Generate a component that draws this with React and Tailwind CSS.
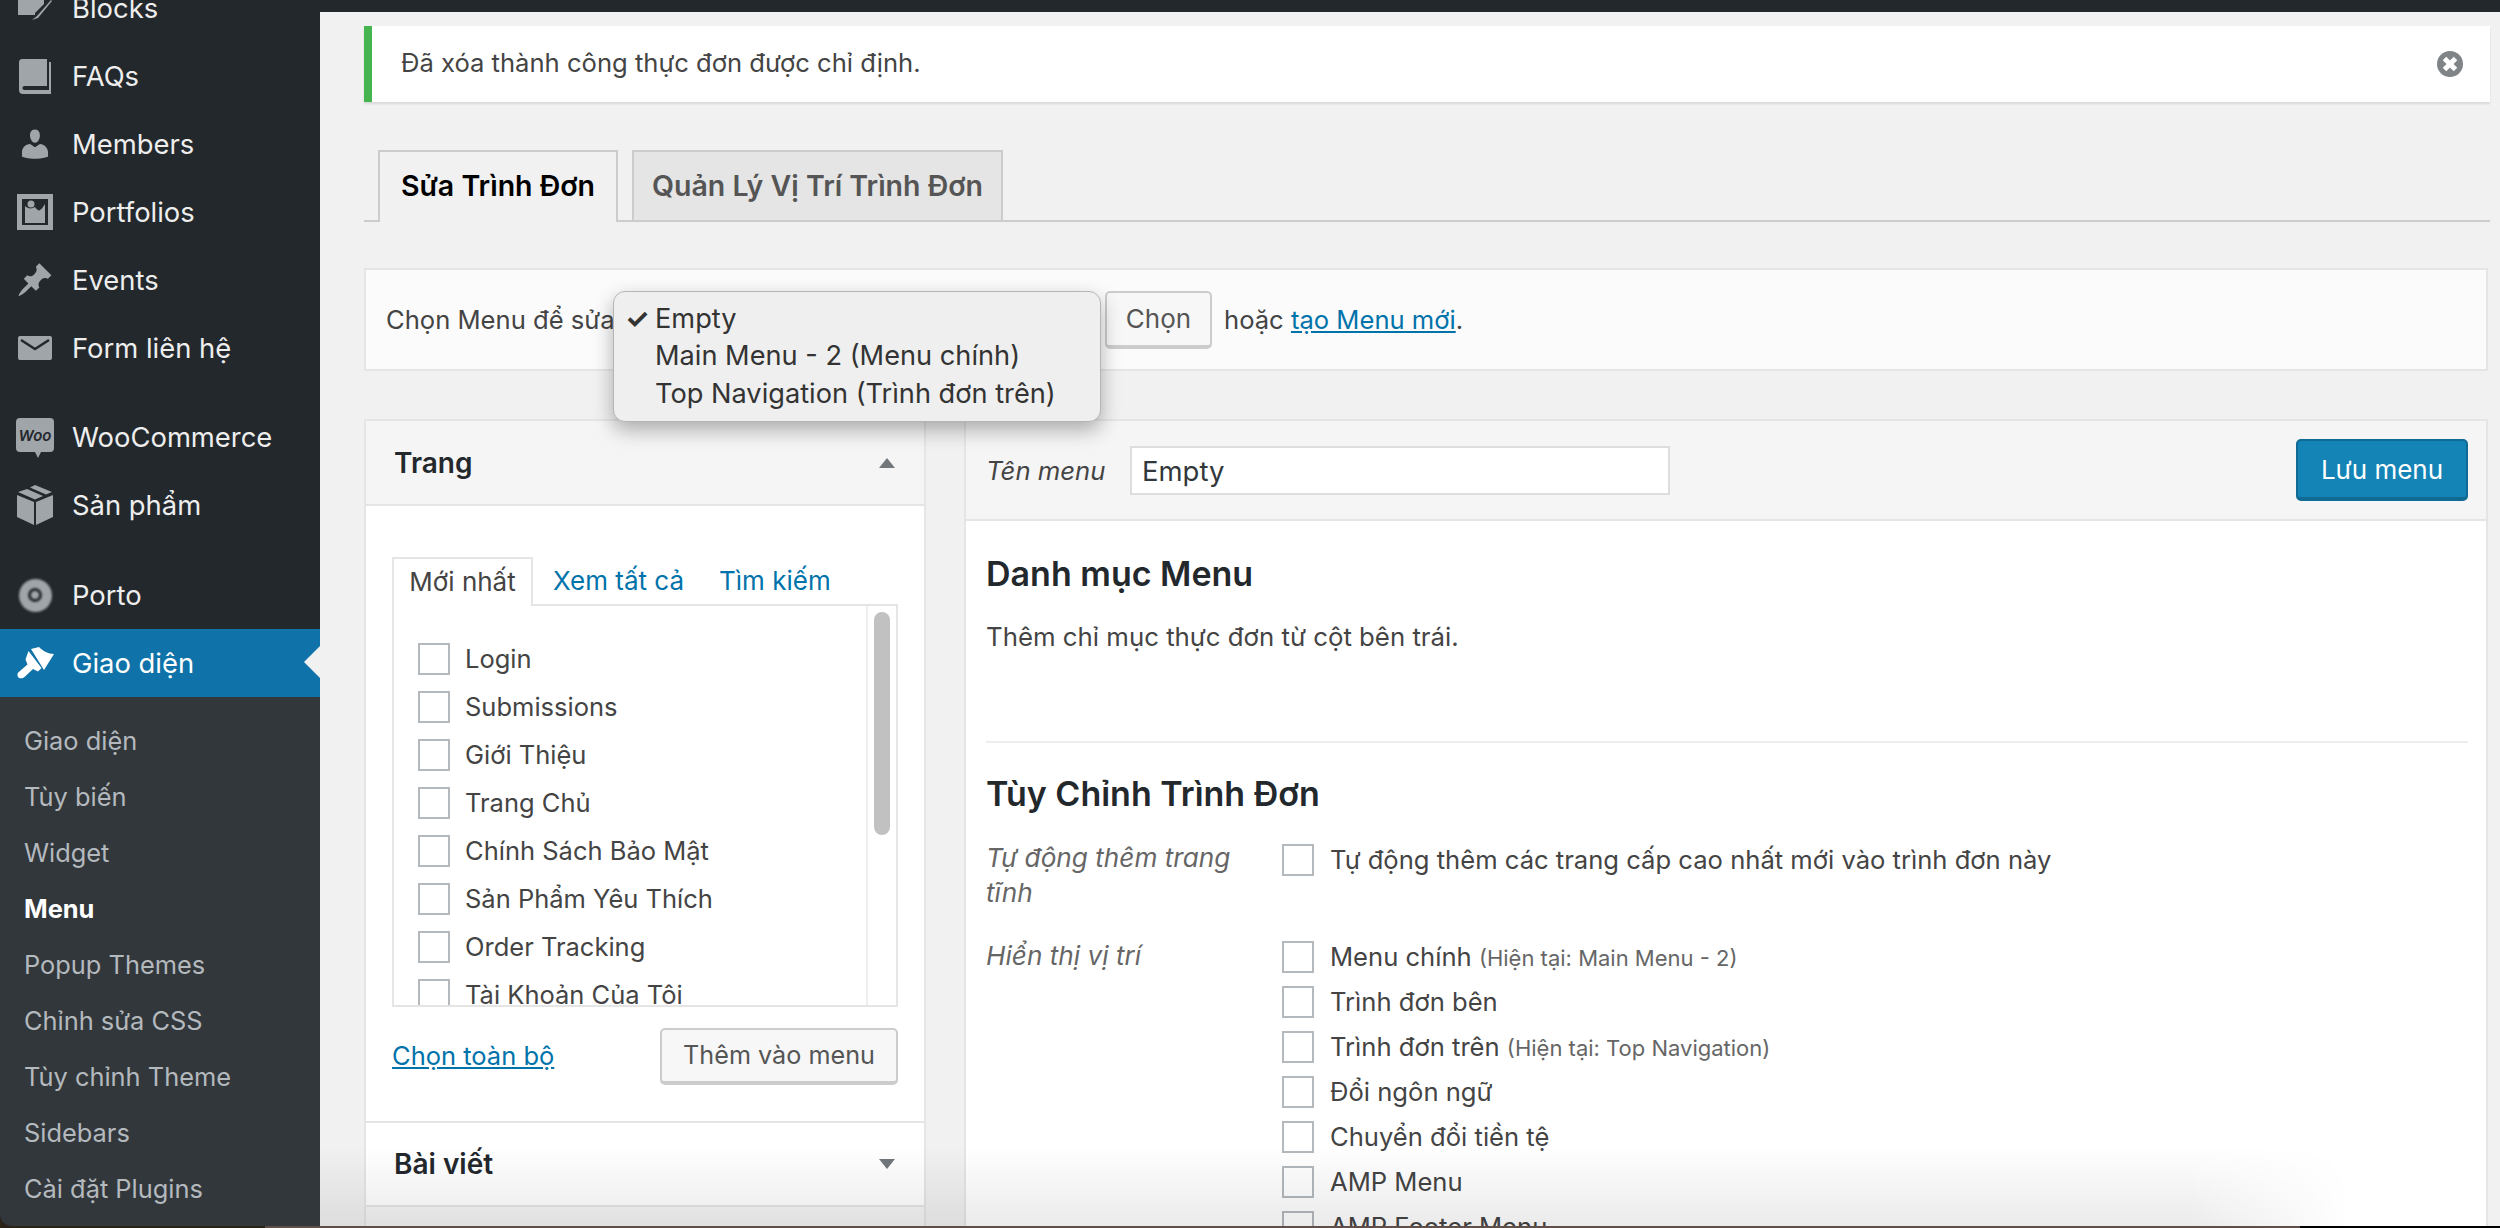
const ICON = "#a0a5aa";

const BlockIcon = () => (
  <svg width="36" height="36" viewBox="0 0 36 36" fill={ICON}>
    <path d="M1 2h26v12l-9 9 0 2H1z" />
    <path d="M20 26l14-16 1 1-14 17-6 2z" />
  </svg>
);
const BookIcon = () => (
  <svg width="34" height="36" viewBox="0 0 34 36" fill={ICON}>
    <path d="M1 5c0-3 1-4 4-4h24v27H7c-1.500 0-2.500.500-2.500 2s1 2 2.500 2h24V4h2v32H5c-3 0-4-2-4-4z" />
  </svg>
);
const UserIcon = () => (
  <svg width="36" height="36" viewBox="0 0 20 20" fill={ICON}>
    <path d="M10 9.250c-2.270 0-2.730-3.440-2.730-3.440C7 4.020 7.820 2 9.970 2c2.160 0 2.980 2.020 2.710 3.810 0 0-.410 3.440-2.680 3.440zm0 2.570L12.720 10c2.390 0 4.520 2.330 4.520 4.530v2.490s-3.650 1.130-7.240 1.130c-3.650 0-7.240-1.130-7.240-1.130v-2.490c0-2.250 1.940-4.480 4.470-4.480z" />
  </svg>
);
const PortfolioIcon = () => (
  <svg width="36" height="36" viewBox="0 0 36 36" fill={ICON}>
    <path fillRule="evenodd" d="M0 0h36v36H0zM5 5v26h26V5z" />
    <circle cx="14" cy="10" r="3.500" />
    <path d="M8 12c3 3 7 3 10 1 2 3 4 4 5 3 2-1 3-3 5-6v19H8z" />
  </svg>
);
const PinIcon = () => (
  <svg width="38" height="38" viewBox="0 0 20 20" fill={ICON}>
    <path d="M10.440 3.020l1.820-1.820 6.360 6.350-1.830 1.820c-1.050-.680-2.480-.570-3.410.360l-.750.750c-.920.930-1.040 2.350-.350 3.410l-1.830 1.820-2.410-2.410-2.800 2.790c-.420.420-3.380 2.710-3.800 2.290s1.860-3.390 2.280-3.810l2.790-2.790L4.100 9.360l1.830-1.820c1.050.690 2.480.570 3.400-.360l.750-.750c.930-.920 1.050-2.350.360-3.410z" />
  </svg>
);
const MailIcon = () => (
  <svg width="34" height="24" viewBox="0 0 34 24">
    <rect width="34" height="24" rx="2" fill={ICON} />
    <path d="M3 4l14 9 14-9" fill="none" stroke="#23282d" strokeWidth="2.500" />
  </svg>
);
const BoxIcon = () => (
  <svg width="36" height="40" viewBox="0 0 36 40" fill={ICON}>
    <path d="M18 0l17 7-6 2.500L13 2.500zM10 4l16 7-8 3.500L1 7z" />
    <path d="M0 10l17 7v23L0 32z" />
    <path d="M36 10l-17 7v23l17-8z" />
  </svg>
);
const BrushIcon = () => (
  <svg width="38" height="32" viewBox="17 648 38 32" fill="#fff">
    <path d="M32 650l8-2c4 4 9 7 15 7l-10 16z" />
    <path d="M29.500 652l13 17-3.500 3.500-5-2.500-8.500 8c-2 2-6.500 2-7-1.500-.500-2 1-3.500 3-5l7-6-2-5z" />
  </svg>
);
const WooIcon = () => (
  <div className="relative -mt-[4px] flex h-[34px] w-[38px] items-center justify-center rounded-[4px] bg-[#a0a5aa]">
    <span className="text-[15px] font-semibold italic leading-none text-[#23282d]">Woo</span>
    <div className="absolute -bottom-[6px] left-[19px] h-0 w-0 border-x-[3px] border-t-[6px] border-x-transparent border-t-[#a0a5aa]" />
  </div>
);
const PortoIcon = () => (
  <div className="flex h-[33px] w-[33px] items-center justify-center rounded-full bg-[#a0a5aa] blur-[1px]">
    <div className="h-[14px] w-[14px] rounded-full border-[3px] border-[#23282d]" />
  </div>
);

const menuItems = [
  { label: "Blocks", icon: <BlockIcon /> },
  { label: "FAQs", icon: <BookIcon /> },
  { label: "Members", icon: <UserIcon /> },
  { label: "Portfolios", icon: <PortfolioIcon /> },
  { label: "Events", icon: <PinIcon /> },
  { label: "Form liên hệ", icon: <MailIcon /> },
  { gap: 21 },
  { label: "WooCommerce", icon: <WooIcon /> },
  { label: "Sản phẩm", icon: <BoxIcon /> },
  { gap: 22 },
  { label: "Porto", icon: <PortoIcon /> },
];

const subItems = ["Giao diện", "Tùy biến", "Widget", "Menu", "Popup Themes", "Chỉnh sửa CSS", "Tùy chỉnh Theme", "Sidebars", "Cài đặt Plugins"];
const pages = ["Login", "Submissions", "Giới Thiệu", "Trang Chủ", "Chính Sách Bảo Mật", "Sản Phẩm Yêu Thích", "Order Tracking", "Tài Khoản Của Tôi"];
const locations = [
  { label: "Menu chính", note: "(Hiện tại: Main Menu - 2)" },
  { label: "Trình đơn bên" },
  { label: "Trình đơn trên", note: "(Hiện tại: Top Navigation)" },
  { label: "Đổi ngôn ngữ" },
  { label: "Chuyển đổi tiền tệ" },
  { label: "AMP Menu" },
  { label: "AMP Footer Menu" },
];

const Checkbox = () => <div className="h-[32px] w-[32px] shrink-0 border-2 border-[#b4b9be] bg-white" />;

const Sidebar = () => (
  <aside className="flex w-[320px] shrink-0 flex-col overflow-hidden rounded-bl-[12px] bg-[#23282d] text-[27.4px] text-[#eeeeee]">
    <div className="-mt-[26px]">
      {menuItems.map((item, i) =>
        item.gap ? (
          <div key={i} style={{ height: item.gap }} />
        ) : (
          <div key={i} className="flex h-[68px] items-center">
            <div className="flex w-[72px] justify-center pr-[2px]">{item.icon}</div>
            <span className="pt-[2px]">{item.label}</span>
          </div>
        )
      )}
    </div>
    <div className="relative flex h-[68px] shrink-0 items-center bg-[#0f73a9] text-white">
      <div className="flex w-[72px] justify-center pr-[2px]"><BrushIcon /></div>
      <span className="pt-[2px]">Giao diện</span>
      <div className="absolute right-0 top-[17px] h-0 w-0 border-y-[16px] border-r-[16px] border-y-transparent border-r-[#f1f1f1]" />
    </div>
    <div className="flex-1 bg-[#32373c] pt-[16px] text-[25.4px] text-[#b4b9be]">
      {subItems.map((s) => (
        <div key={s} className={`flex h-[56px] items-center pl-[24px] ${s === "Menu" ? "font-bold text-white" : ""}`}>{s}</div>
      ))}
    </div>
  </aside>
);

const PagesPanel = () => (
  <div className="w-[562px] shrink-0 border-2 border-[#e5e5e5] bg-white">
    <div className="flex h-[85px] items-center justify-between border-b-2 border-[#e5e5e5] bg-[#f5f5f5] pl-[28px] pr-[29px]">
      <span className="text-[28px] font-semibold text-[#23282d]">Trang</span>
      <div className="h-0 w-0 border-x-[8px] border-b-[10px] border-x-transparent border-b-[#72777c]" />
    </div>
    <div className="border-b-2 border-[#e5e5e5] px-[26px] pb-[36px] pt-[51px]">
      <div className="flex h-[47px] items-end text-[26px]">
        <div className="-mb-[2px] flex h-[49px] w-[141px] items-center justify-center border-x-2 border-t-2 border-[#e5e5e5] bg-white pb-[2px] text-[#444444]">Mới nhất</div>
        <span className="ml-[20px] pb-[4px] text-[#0073aa]">Xem tất cả</span>
        <span className="ml-[35px] pb-[4px] text-[#0073aa]">Tìm kiếm</span>
      </div>
      <div className="flex h-[403px] overflow-hidden border-2 border-[#e5e5e5]">
        <div className="flex-1 pl-[24px] pt-[29px] text-[25.5px] text-[#444444]">
          {pages.map((p) => (
            <div key={p} className="flex h-[48px] items-center gap-[15px]"><Checkbox />{p}</div>
          ))}
        </div>
        <div className="w-[30px] border-l-2 border-[#eeeeee] px-[6px] pt-[6px]">
          <div className="h-[223px] rounded-full bg-[#c1c1c1]" />
        </div>
      </div>
      <div className="mt-[21px] flex items-center justify-between text-[25.5px]">
        <span className="text-[#0073aa] underline">Chọn toàn bộ</span>
        <button className="h-[57px] w-[238px] rounded-[5px] border-2 border-b-[4px] border-[#cccccc] bg-[#f7f7f7] text-[25.2px] text-[#555555]">Thêm vào menu</button>
      </div>
    </div>
    <div className="flex h-[84px] items-center justify-between border-b-2 border-[#e5e5e5] pl-[28px] pr-[29px]">
      <span className="text-[28px] font-semibold text-[#23282d]">Bài viết</span>
      <div className="h-0 w-0 border-x-[8px] border-t-[10px] border-x-transparent border-t-[#72777c]" />
    </div>
    <div className="h-[40px] bg-[#f5f5f5]" />
  </div>
);

const EditorPanel = () => (
  <div className="flex-1 border-2 border-[#e5e5e5] bg-white text-[#444444]">
    <div className="flex h-[100px] items-center border-b-2 border-[#e5e5e5] bg-[#f5f5f5] pl-[20px] pr-[18px]">
      <span className="w-[144px] pt-[3px] text-[25.7px] italic">Tên menu</span>
      <div className="flex h-[49px] w-[540px] items-center border-2 border-[#dddddd] bg-white pl-[10px] pt-[3px] text-[27.5px] text-[#32373c]">Empty</div>
      <button className="ml-auto h-[62px] w-[172px] rounded-[5px] border-2 border-b-[4px] border-[#0f6a94] bg-[#1483b5] pt-[1px] text-[26px] text-white">Lưu menu</button>
    </div>
    <div className="pl-[20px] pr-[18px] pt-[33px]">
      <h3 className="text-[34px] font-semibold leading-[40px] text-[#23282d]">Danh mục Menu</h3>
      <p className="mt-[25px] text-[25.8px] leading-[36px]">Thêm chỉ mục thực đơn từ cột bên trái.</p>
      <div className="mt-[86px] border-t-2 border-[#eeeeee]" />
      <h3 className="mt-[31px] text-[34px] font-semibold leading-[40px] text-[#23282d]">Tùy Chỉnh Trình Đơn</h3>
      <div className="mt-[30px] flex h-[97px] text-[25.6px]">
        <div className="-mt-[4px] w-[296px] text-[26.2px] italic leading-[35px] text-[#666666]">Tự động thêm trang<br />tĩnh</div>
        <div className="flex items-start gap-[16px]"><Checkbox /><span className="leading-[32px]">Tự động thêm các trang cấp cao nhất mới vào trình đơn này</span></div>
      </div>
      <div className="flex text-[25.6px]">
        <div className="-mt-[3px] w-[296px] text-[26.2px] italic leading-[35px] text-[#666666]">Hiển thị vị trí</div>
        <div>
          {locations.map((l) => (
            <div key={l.label} className="flex h-[45px] items-start gap-[16px]">
              <Checkbox />
              <span className="leading-[32px]">{l.label} {l.note && <span className="text-[22px] text-[#666666]">{l.note}</span>}</span>
            </div>
          ))}
        </div>
      </div>
    </div>
  </div>
);

const App = () => (
  <div className="relative flex h-[1228px] w-[2500px] flex-col overflow-hidden bg-[#2b2318] font-['Inter',sans-serif]">
    <div className="flex h-[1226px] shrink-0">
      <Sidebar />
      <main className="flex min-w-0 flex-1 flex-col overflow-hidden bg-[#f1f1f1]">
        <div className="h-[12px] shrink-0 bg-[#23282d]" />
        <div className="pl-[44px] pr-[10px]">
          <div className="mt-[14px] flex h-[76px] items-center justify-between border-l-[8px] border-[#46b450] bg-white pl-[29px] pr-[27px] text-[25.6px] text-[#444444] shadow-[0_2px_2px_rgba(0,0,0,0.1)]">
            <span className="pb-[2px]">Đã xóa thành công thực đơn được chỉ định.</span>
            <svg width="26" height="26" viewBox="0 0 26 26">
              <circle cx="13" cy="13" r="13" fill="#7f8487" />
              <path d="M7.500 7.500l11 11M18.500 7.500l-11 11" stroke="#fff" strokeWidth="5" />
            </svg>
          </div>
          <div className="mt-[48px] flex h-[72px] gap-[14px] border-b-2 border-[#cccccc] pl-[14px] text-[28.5px] font-semibold">
            <div className="flex h-[72px] w-[240px] items-center justify-center border-x-2 border-t-2 border-[#cccccc] bg-[#f1f1f1] pb-[2px] text-black">Sửa Trình Đơn</div>
            <div className="flex h-[70px] w-[371px] items-center justify-center border-x-2 border-t-2 border-[#cccccc] bg-[#e5e5e5] text-[#555555]">Quản Lý Vị Trí Trình Đơn</div>
          </div>
          <div className="mr-[2px] mt-[46px] flex h-[103px] items-center border-2 border-[#e5e5e5] bg-[#fbfbfb] pl-[20px] text-[25.6px] text-[#444444]">
            <span className="w-[228px] shrink-0 whitespace-nowrap pt-[2px]">Chọn Menu để sửa</span>
            <div className="relative h-[58px] w-[491px] shrink-0">
              <div className="absolute -left-[1px] top-0 z-10 flex h-[131px] w-[488px] flex-col rounded-[12px] border border-[#b5b5b5] bg-[#efefef] pl-[41px] pt-[8px] text-[27.2px] leading-[37.5px] text-[#333333] shadow-[0_8px_20px_rgba(0,0,0,0.3)]">
                <span className="absolute left-[11px] top-[8px] font-bold">✓</span>
                <span>Empty</span>
                <span>Main Menu - 2 (Menu chính)</span>
                <span>Top Navigation (Trình đơn trên)</span>
              </div>
            </div>
            <button className="h-[58px] w-[107px] rounded-[5px] border-2 border-b-[4px] border-[#cccccc] bg-[#f7f7f7] text-[26px] text-[#555555]">Chọn</button>
            <span className="ml-[12px] pt-[2px]">hoặc <span className="text-[#0073aa] underline">tạo Menu mới</span>.</span>
          </div>
          <div className="mt-[48px] flex gap-[38px] pr-[2px]">
            <PagesPanel />
            <EditorPanel />
          </div>
        </div>
      </main>
    </div>
    <div className="flex h-[2px] shrink-0">
      <div className="w-[265px] bg-[#2b2318]" />
      <div className="flex-1 bg-[#5f4f48]" />
      <div className="w-[200px] bg-black" />
    </div>
    <div className="pointer-events-none absolute bottom-[2px] left-[320px] right-[150px] h-[80px] bg-gradient-to-b from-transparent to-black/[0.08] [mask-image:linear-gradient(to_right,black_92%,transparent)]" />
  </div>
);

export default App;
